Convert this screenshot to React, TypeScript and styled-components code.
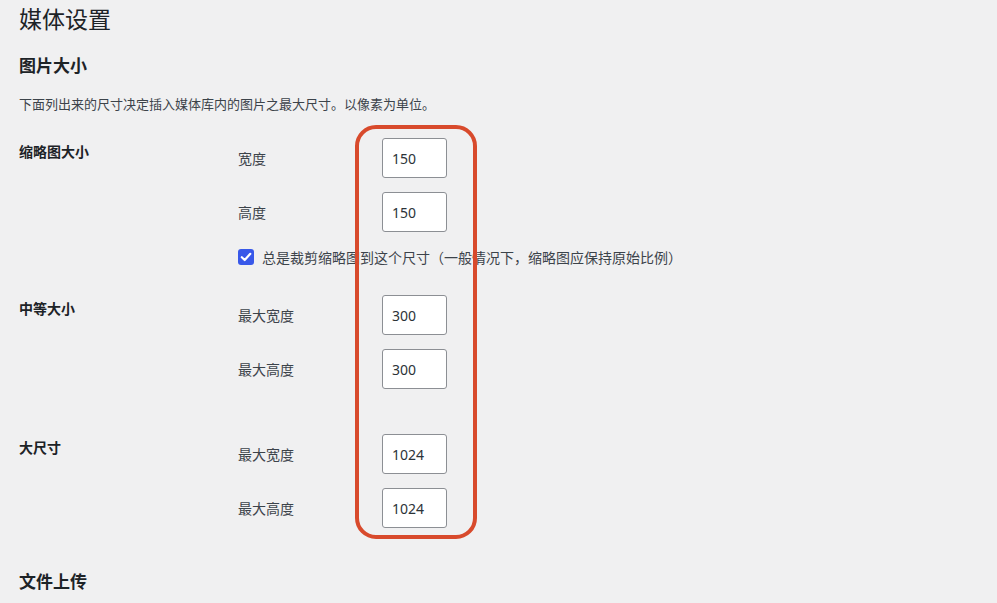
import styled, { createGlobalStyle } from "styled-components";

const GlobalStyle = createGlobalStyle`
  html, body {
    margin: 0;
    padding: 0;
    background: #f0f0f1;
  }
  body {
    font-family: "Noto Sans", "Noto Sans CJK SC", sans-serif;
    color: #3c434a;
    font-size: 13px;
  }
`;

type SizeField = { label: string; value: string };

type SizeGroup = {
  title: string;
  fields: SizeField[];
  crop?: string;
  spaceAbove: number;
};

const groups: SizeGroup[] = [
  {
    title: "缩略图大小",
    fields: [
      { label: "宽度", value: "150" },
      { label: "高度", value: "150" },
    ],
    crop: "总是裁剪缩略图到这个尺寸（一般情况下，缩略图应保持原始比例）",
    spaceAbove: 0,
  },
  {
    title: "中等大小",
    fields: [
      { label: "最大宽度", value: "300" },
      { label: "最大高度", value: "300" },
    ],
    spaceAbove: 28,
  },
  {
    title: "大尺寸",
    fields: [
      { label: "最大宽度", value: "1024" },
      { label: "最大高度", value: "1024" },
    ],
    spaceAbove: 45,
  },
];

const App = () => {
  return (
    <Wrap>
      <GlobalStyle />
      <Title>媒体设置</Title>
      <SectionTitle>图片大小</SectionTitle>
      <Description>下面列出来的尺寸决定插入媒体库内的图片之最大尺寸。以像素为单位。</Description>
      <Table>
        {groups.map((group) => (
          <Row key={group.title} $spaceAbove={group.spaceAbove}>
            <RowHead>{group.title}</RowHead>
            <Fields>
              {group.fields.map((field) => (
                <Field key={field.label}>
                  <FieldLabel>{field.label}</FieldLabel>
                  <NumberInput type="number" defaultValue={field.value} />
                </Field>
              ))}
              {group.crop && (
                <CheckRow>
                  <CheckBox>
                    <svg width="12" height="12" viewBox="0 0 12 12">
                      <path
                        d="M1.8 6.2 L4.7 9 L10.3 2.8"
                        fill="none"
                        stroke="#fff"
                        strokeWidth="2.2"
                        strokeLinecap="round"
                        strokeLinejoin="round"
                      />
                    </svg>
                  </CheckBox>
                  <CheckText>{group.crop}</CheckText>
                </CheckRow>
              )}
            </Fields>
          </Row>
        ))}
        <Highlight />
      </Table>
      <SectionTitle>文件上传</SectionTitle>
    </Wrap>
  );
};

export default App;

const Wrap = styled.div`
  padding: 0 19px;
  height: 603px;
  overflow: hidden;
`;

const Title = styled.h1`
  margin: 0;
  padding: 4px 0 0;
  font-size: 23px;
  font-weight: 400;
  line-height: 30px;
  color: #1d2327;
`;

const SectionTitle = styled.h2`
  margin: 21px 0 0;
  font-size: 17px;
  font-weight: 700;
  line-height: 22px;
  color: #1d2327;
`;

const Description = styled.p`
  margin: 17px 0 0;
  font-size: 13px;
  line-height: 20px;
  color: #3c434a;
`;

const Table = styled.div`
  position: relative;
  display: flex;
  flex-direction: column;
  margin: 24px 0 43px;
`;

const Row = styled.div<{ $spaceAbove: number }>`
  display: grid;
  grid-template-columns: 219px 1fr;
  margin-top: ${(p) => p.$spaceAbove}px;
`;

const RowHead = styled.div`
  padding-top: 4px;
  font-size: 14px;
  font-weight: 700;
  line-height: 20px;
  color: #1d2327;
`;

const Fields = styled.div`
  display: flex;
  flex-direction: column;
  gap: 14px;
`;

const Field = styled.div`
  display: grid;
  grid-template-columns: 144px 65px;
  align-items: center;
`;

const FieldLabel = styled.label`
  font-size: 14px;
  color: #3c434a;
`;

const NumberInput = styled.input`
  box-sizing: border-box;
  width: 65px;
  height: 40px;
  padding: 0 8px 0 9px;
  border: 1px solid #8c8f94;
  border-radius: 3px;
  background: #fff;
  font-family: "Noto Sans", sans-serif;
  font-size: 14px;
  color: #2c3338;
  -moz-appearance: textfield;
  &::-webkit-inner-spin-button,
  &::-webkit-outer-spin-button {
    -webkit-appearance: none;
    margin: 0;
  }
`;

const CheckRow = styled.div`
  display: flex;
  align-items: center;
  gap: 8px;
  margin-top: 1px;
`;

const CheckBox = styled.span`
  display: inline-flex;
  align-items: center;
  justify-content: center;
  width: 16px;
  height: 16px;
  border-radius: 3px;
  background: #3858e9;
`;

const CheckText = styled.label`
  font-size: 14px;
  color: #3c434a;
`;

const Highlight = styled.div`
  position: absolute;
  left: 336px;
  top: -13px;
  width: 122px;
  height: 414px;
  box-sizing: border-box;
  border: 4px solid #d84a2c;
  border-radius: 21px;
  pointer-events: none;
`;
